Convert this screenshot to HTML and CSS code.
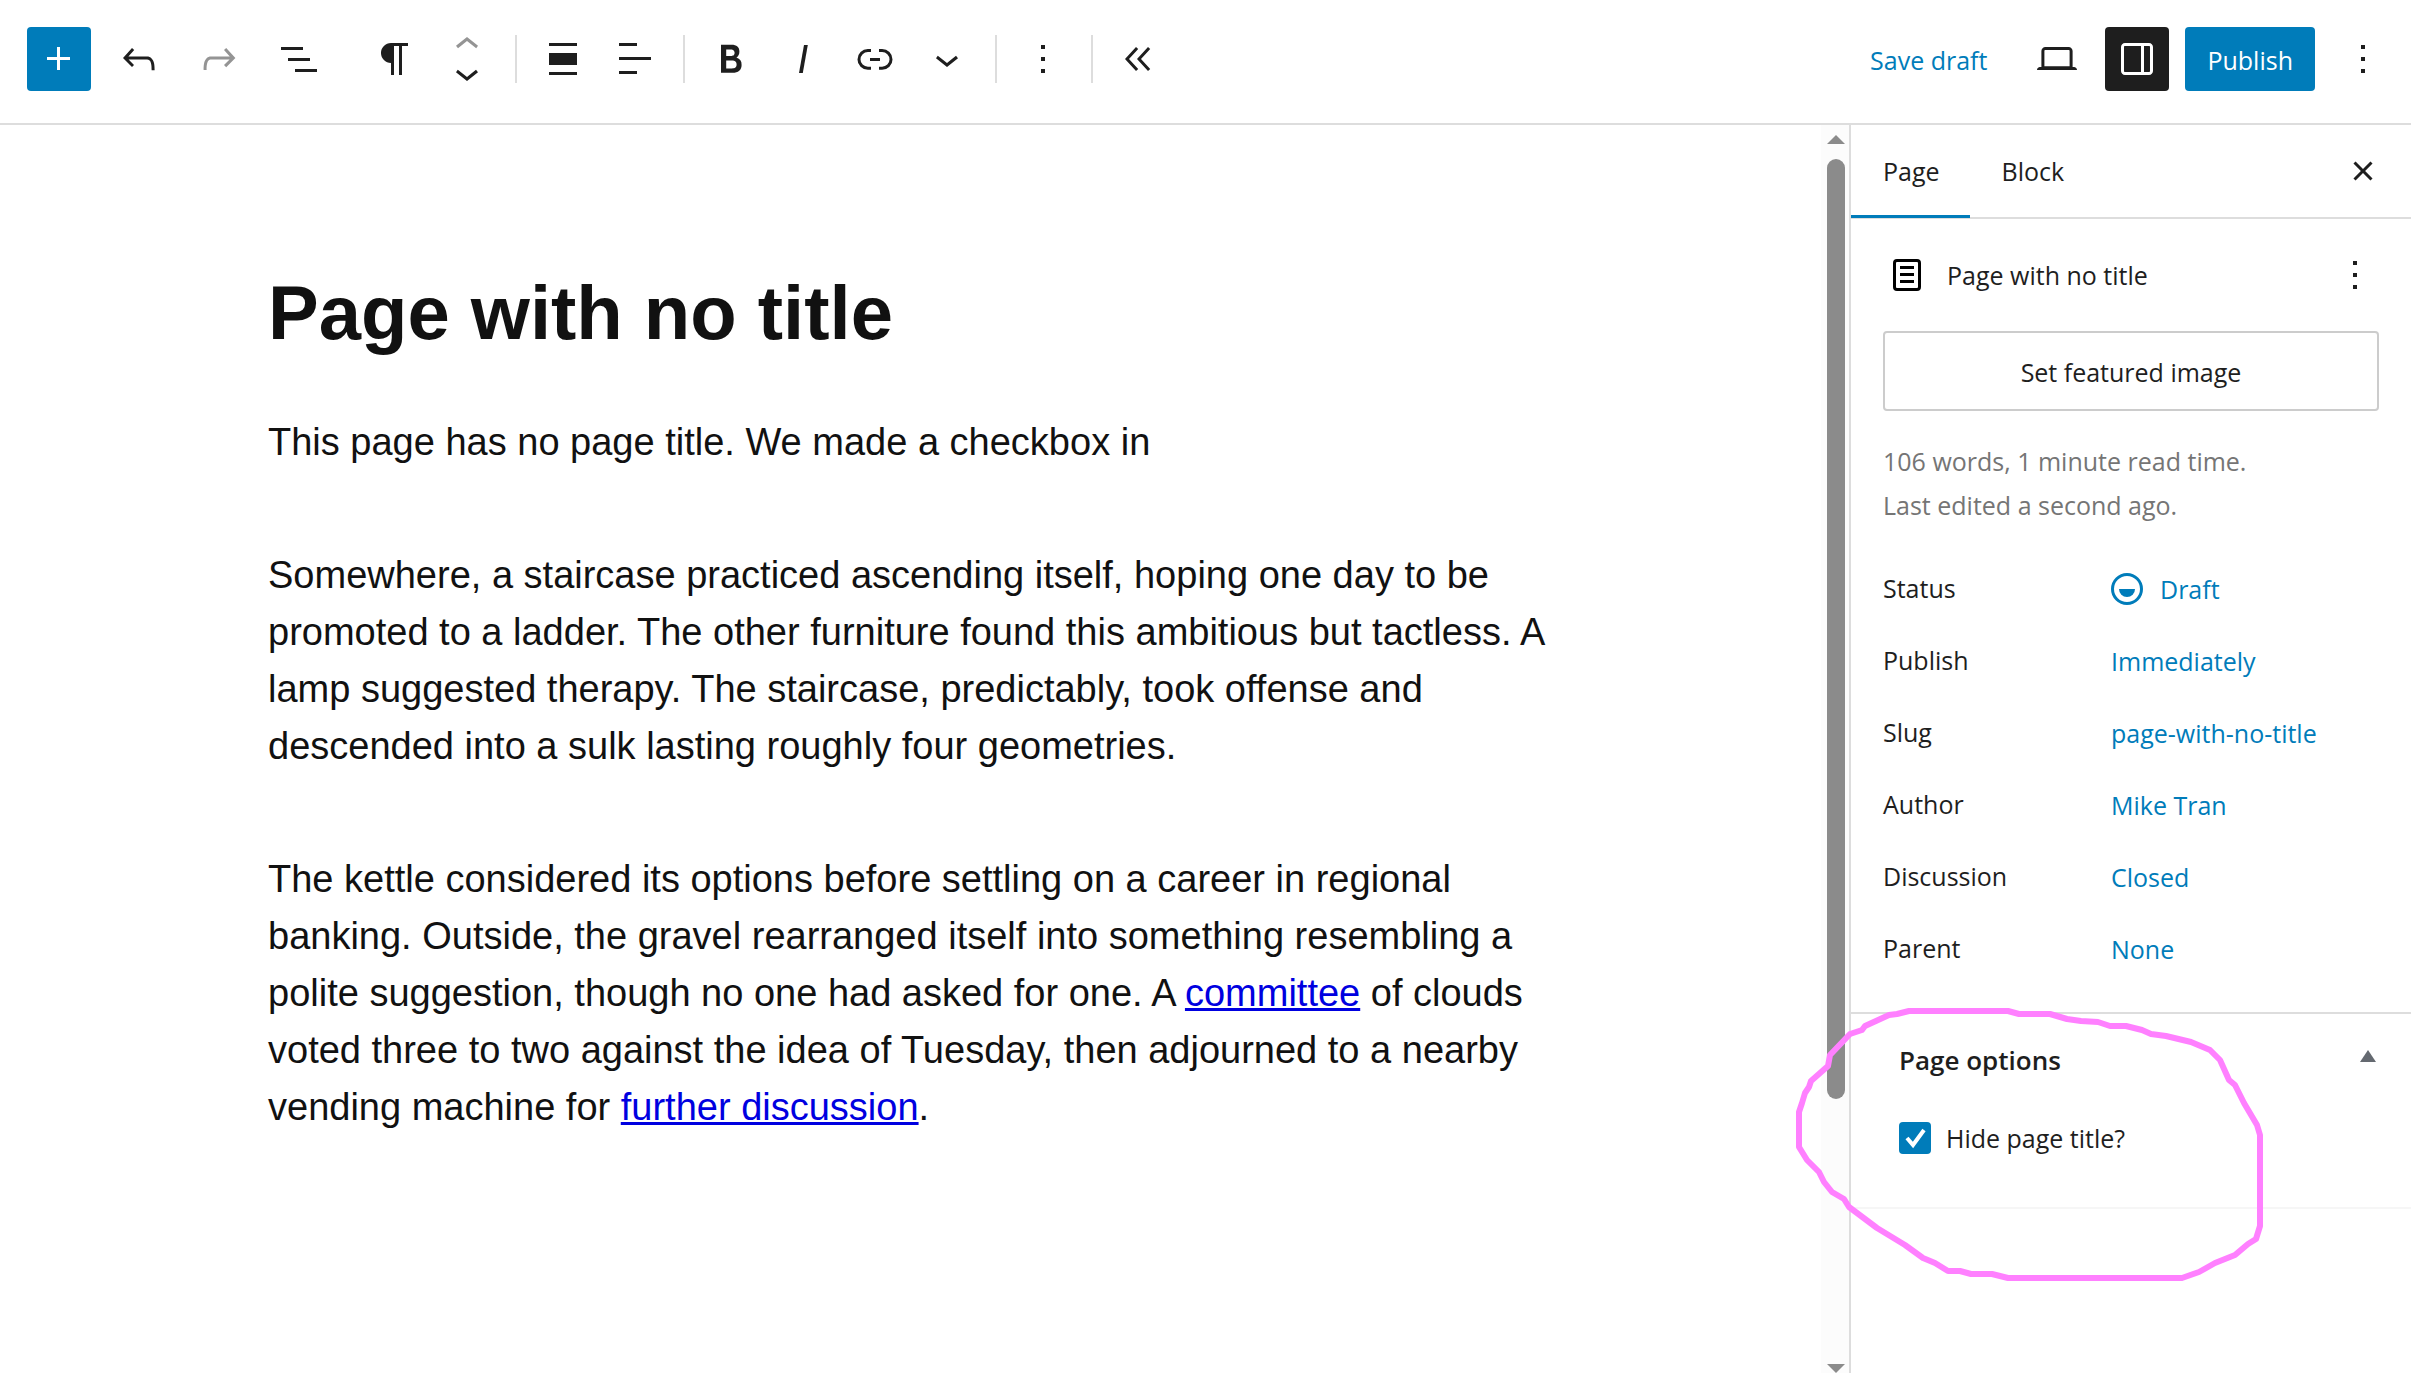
FILE: index.html
```
<!DOCTYPE html>
<html lang="en">
<head>
  <meta charset="UTF-8" />
  <meta name="viewport" content="width=device-width, initial-scale=1.0"/>
  <title>Edit Page</title>
  <link rel="stylesheet" href="styles.css">
</head>
<body>

  <!-- Top toolbar -->
  <header class="header">
    <div class="tools">
      <button class="icon-button primary" aria-label="Add block"><svg viewBox="0 0 24 24"><path d="M11 12.5V17.5H12.5V12.5H17.5V11H12.5V6H11V11H6V12.5H11Z"/></svg></button>
      <button class="icon-button" aria-label="Undo"><svg viewBox="0 0 24 24"><path d="M18.3 11.7c-.6-.6-1.4-.9-2.3-.9H6.7l2.9-3.3-1.1-1-4.5 5L8.5 16l1-1-2.7-2.7H16c.5 0 .9.2 1.3.5 1 1 1 3.4 1 4.5v.3h1.5v-.2c0-1.5 0-4.3-1.5-5.7z"/></svg></button>
      <button class="icon-button" aria-label="Redo" disabled><svg viewBox="0 0 24 24"><path d="M15.6 6.5l-1.1 1 2.9 3.3H8c-.9 0-1.7.3-2.3.9-1.4 1.5-1.4 4.2-1.4 5.6v.2h1.5v-.3c0-1.1 0-3.5 1-4.5.3-.3.7-.5 1.3-.5h9.2L14.5 15l1.1 1.1 4.6-4.6-4.6-5z"/></svg></button>
      <button class="icon-button" aria-label="Document overview"><svg viewBox="0 0 24 24"><path d="M3 6h11v1.5H3V6Zm3.5 5.5h11V13h-11v-1.5ZM21 17H10v1.5h11V17Z"/></svg></button>
    </div>

    <div class="block-toolbar">
      <div class="group">
        <button class="tool" aria-label="Paragraph"><svg viewBox="0 0 24 24"><path d="m9.996 14v-.225l.004 0v6.225h1.5v-14.5h2.5v14.5h1.5v-14.5h3v-1.5h-8.504c-2.761 0-5 2.239-5 5 0 2.761 2.239 5 5 5z"/></svg></button>
        <div class="mover">
          <button aria-label="Move up" disabled><svg viewBox="0 0 24 24"><path d="M6.5 12.4L12 8l5.5 4.4-.9 1.2L12 10l-4.5 3.6-1-1.2z"/></svg></button>
          <button aria-label="Move down"><svg viewBox="0 0 24 24"><path d="M17.5 11.6L12 16l-5.5-4.4.9-1.2L12 14l4.5-3.6 1 1.2z"/></svg></button>
        </div>
      </div>
      <div class="group">
        <button class="tool" aria-label="Align"><svg viewBox="0 0 24 24"><path d="M19 5.5H5V4h14v1.5ZM19 20H5v-1.5h14V20ZM5 9h14v6H5V9Z"/></svg></button>
        <button class="tool" aria-label="Align text"><svg viewBox="0 0 24 24"><path d="M13 5.5H4V4h9v1.5Zm7 7H4V11h16v1.5Zm-7 7H4V18h9v1.5Z"/></svg></button>
      </div>
      <div class="group">
        <button class="tool" aria-label="Bold"><svg viewBox="0 0 24 24"><path d="M14.7 11.3c1-.6 1.5-1.6 1.5-3 0-2.3-1.3-3.4-4-3.4H7v14h5.8c1.4 0 2.5-.3 3.3-1 .8-.7 1.2-1.7 1.2-2.9.1-1.9-.8-3.1-2.6-3.7zm-5.1-4h2.3c.6 0 1.1.1 1.4.4.3.3.5.7.5 1.2s-.2 1-.5 1.2c-.3.3-.8.4-1.4.4H9.6V7.3zm4.6 9c-.4.3-1 .4-1.7.4H9.6v-3.9h2.9c.7 0 1.3.2 1.7.5.4.3.6.8.6 1.4s-.2 1.2-.6 1.6z"/></svg></button>
        <button class="tool" aria-label="Italic"><svg viewBox="0 0 24 24"><path d="M12.5 5L10 19h1.9l2.5-14z"/></svg></button>
        <button class="tool" aria-label="Link"><svg viewBox="0 0 24 24"><path d="M10 17.389H8.444A5.194 5.194 0 1 1 8.444 7H10v1.5H8.444a3.694 3.694 0 0 0 0 7.389H10v1.5ZM14 7h1.556a5.194 5.194 0 0 1 0 10.39H14v-1.5h1.556a3.694 3.694 0 0 0 0-7.39H14V7Zm-4.5 6h5v-1.5h-5V13Z"/></svg></button>
        <button class="tool" aria-label="More"><svg viewBox="0 0 24 24"><path d="M17.5 11.6L12 16l-5.5-4.4.9-1.2L12 14l4.5-3.6 1 1.2z"/></svg></button>
      </div>
      <div class="group">
        <button class="tool" aria-label="Block options"><svg viewBox="0 0 24 24"><path d="M13 19h-2v-2h2v2zm0-6h-2v-2h2v2zm0-6h-2V5h2v2z"/></svg></button>
      </div>
      <div class="group">
        <button class="tool" aria-label="Hide block tools"><svg viewBox="0 0 24 24"><path d="M11.6 7l-1.1-1L5 12l5.5 6 1.1-1L7 12l4.6-5zm6 0l-1.1-1-5.5 6 5.5 6 1.1-1-4.6-5 4.6-5z"/></svg></button>
      </div>
    </div>

    <div class="settings">
      <button class="text-button">Save draft</button>
      <button class="icon-button" aria-label="View"><svg viewBox="0 0 24 24"><path d="M20.5 16h-.7V8c0-1.1-.9-2-2-2H6.2c-1.1 0-2 .9-2 2v8h-.7c-.8 0-1.5.7-1.5 1.5h20c0-.8-.7-1.5-1.5-1.5zM5.7 8c0-.3.2-.5.5-.5h11.6c.3 0 .5.2.5.5v7.6H5.7V8z"/></svg></button>
      <button class="icon-button pressed" aria-label="Settings"><svg viewBox="0 0 24 24"><path d="M18 4H6c-1.1 0-2 .9-2 2v12c0 1.1.9 2 2 2h12c1.1 0 2-.9 2-2V6c0-1.1-.9-2-2-2zm-4 14.5H6c-.3 0-.5-.2-.5-.5V6c0-.3.2-.5.5-.5h8v13zm4.5-.5c0 .3-.2.5-.5.5h-2.5v-13H18c.3 0 .5.2.5.5v12z"/></svg></button>
      <button class="text-button primary">Publish</button>
      <button class="icon-button" aria-label="Options"><svg viewBox="0 0 24 24"><path d="M13 19h-2v-2h2v2zm0-6h-2v-2h2v2zm0-6h-2V5h2v2z"/></svg></button>
    </div>
  </header>

  <div class="body">
    <!-- Page content -->
    <main class="canvas">
      <article class="post">
        <h1>Page with no title</h1>
        <p>This page has no page title. We made a checkbox in</p>
        <p>Somewhere, a staircase practiced ascending itself, hoping one day to be promoted to a ladder. The other furniture found this ambitious but tactless. A lamp suggested therapy. The staircase, predictably, took offense and descended into a sulk lasting roughly four geometries.</p>
        <p>The kettle considered its options before settling on a career in regional banking. Outside, the gravel rearranged itself into something resembling a polite suggestion, though no one had asked for one. A <a href="#">committee</a> of clouds voted three to two against the idea of Tuesday, then adjourned to a nearby vending machine for <a href="#">further discussion</a>.</p>
      </article>
    </main>

    <div class="scrollbar" aria-hidden="true">
      <svg class="arrow" viewBox="0 0 18 9"><path d="M9 0l9 9H0z"/></svg>
      <div class="track"><div class="thumb"></div></div>
      <svg class="arrow" viewBox="0 0 18 9"><path d="M0 0h18L9 9z"/></svg>
    </div>

    <!-- Settings sidebar -->
    <aside class="sidebar">
      <div class="tabs">
        <button class="tab active">Page</button>
        <button class="tab">Block</button>
        <button class="icon-button close" aria-label="Close settings"><svg viewBox="0 0 24 24"><path d="M12 13.06l3.712 3.713 1.061-1.06L13.061 12l3.712-3.712-1.06-1.06L12 10.938 8.288 7.227l-1.061 1.06L10.939 12l-3.712 3.712 1.06 1.061L12 13.061z"/></svg></button>
      </div>

      <section class="summary">
        <div class="card">
          <svg viewBox="0 0 24 24"><path d="M15.5 7.5h-7V9h7V7.5Zm-7 3.5h7v1.5h-7V11Zm7 3.5h-7V16h7v-1.5Z"/><path fill-rule="evenodd" d="M17 4H7a2 2 0 0 0-2 2v12a2 2 0 0 0 2 2h10a2 2 0 0 0 2-2V6a2 2 0 0 0-2-2ZM7 5.5h10a.5.5 0 0 1 .5.5v12a.5.5 0 0 1-.5.5H7a.5.5 0 0 1-.5-.5V6a.5.5 0 0 1 .5-.5Z"/></svg>
          <h2>Page with no title</h2>
          <button aria-label="Actions"><svg viewBox="0 0 24 24"><path d="M13 19h-2v-2h2v2zm0-6h-2v-2h2v2zm0-6h-2V5h2v2z"/></svg></button>
        </div>
        <button class="featured">Set featured image</button>
        <p class="info">106 words, 1 minute read time.<br>Last edited a second ago.</p>
        <div class="rows">
          <div class="row">
            <span>Status</span>
            <button class="status"><svg viewBox="0 0 16 16"><circle cx="8" cy="8" r="7.25" fill="none" stroke="currentColor" stroke-width="1.5"/><path d="M4 8h8a4 4 0 0 1-8 0z"/></svg>Draft</button>
          </div>
          <div class="row"><span>Publish</span><button>Immediately</button></div>
          <div class="row"><span>Slug</span><button>page-with-no-title</button></div>
          <div class="row"><span>Author</span><button>Mike Tran</button></div>
          <div class="row"><span>Discussion</span><button>Closed</button></div>
          <div class="row"><span>Parent</span><button>None</button></div>
        </div>
      </section>

      <section class="options">
        <div class="options-head">
          <h2>Page options</h2>
          <button aria-label="Toggle panel: Page options"><svg viewBox="0 0 16 12"><path d="M8 0l8 12H0z"/></svg></button>
        </div>
        <label class="check"><input type="checkbox" checked> Hide page title?</label>
        <!-- Hand-drawn circle around the checkbox -->
        <svg class="marker" viewBox="0 0 500 320" aria-hidden="true"><path d="M129 31H228L239 34H270L287 39 301 41 318 42 330 46H346L362 50 371 54 386 56 411 62 430 70 440 80 449 100 455 105 464 123 477 145 480 155V246L476 259 468 264 455 275 435 283 419 292 402 298H228L212 294H191L180 291H168L155 283 143 278 125 265 97 248 69 227 64 219 52 212 44 202 39 192 27 180 19 167V132L22 123 25 113 29 107 31 101 48 86 50 75 70 54 82 50 85 46 109 35 117 34Z"/></svg>
      </section>
    </aside>
  </div>

</body>
</html>
```
FILE: styles.css
```
/* General */
* {
  box-sizing: border-box;
}
body {
  margin: 0;
  height: 100vh;
  display: flex;
  flex-direction: column;
  overflow: hidden;
  background: #fff;
  color: #1e1e1e;
  font-family: "Segoe UI", "Open Sans", "Noto Sans", sans-serif;
  font-size: 25px;
}
button {
  padding: 0;
  border: none;
  background: none;
  color: inherit;
  font: inherit;
  cursor: pointer;
}
button:disabled {
  color: #949494;
}
svg {
  display: block;
  fill: currentColor;
}
h1, h2, p {
  margin: 0;
}

/* Header */
.header {
  display: flex;
  align-items: center;
  padding: 27px 16px 32px 27px;
  border-bottom: 2px solid #ddd;
}
.tools, .settings {
  display: flex;
  gap: 16px;
}
.settings {
  margin-left: auto;
}
.icon-button, .tool {
  display: flex;
  align-items: center;
  justify-content: center;
  width: 64px;
  height: 64px;
  border-radius: 4px;
}
.tool {
  width: 72px;
}
.icon-button svg, .tool svg, .mover svg, .card svg {
  width: 48px;
  height: 48px;
}
.text-button {
  height: 64px;
  padding: 2px 22px 0;
  border-radius: 4px;
  color: #007cba;
}
.primary {
  background: #007cba;
  color: #fff;
}
.pressed {
  background: #1e1e1e;
  color: #fff;
}
.block-toolbar {
  display: flex;
  align-items: center;
  margin-left: 18px;
}
.group {
  display: flex;
  align-items: center;
  height: 48px;
  margin-left: 10px;
  padding-right: 12px;
  border-right: 2px solid #ddd;
}
.group:last-child {
  border-right: none;
}
.mover button {
  display: flex;
  align-items: center;
  justify-content: center;
  width: 72px;
  height: 28px;
}
.mover svg {
  flex: none;
}

/* Content */
.body {
  flex: 1;
  display: flex;
  min-height: 0;
}
.canvas {
  flex: 1;
  padding: 142px 40px 0;
}
.post {
  max-width: 1285px;
  margin: 0 auto;
  color: #111;
  font-family: Arial, "Liberation Sans", sans-serif;
  font-size: 38px;
  line-height: 57px;
}
.post h1 {
  margin-bottom: 56px;
  font-size: 76px;
  line-height: 91px;
}
.post p {
  margin-bottom: 76px;
}
.post a {
  color: #0000e0;
}

/* Scrollbar */
.scrollbar {
  display: flex;
  flex-direction: column;
  align-items: center;
  width: 28px;
  padding-top: 10px;
  padding-left: 2px;
  background: #fcfcfc;
  color: #8b8b8b;
}
.arrow {
  flex: none;
  width: 18px;
  height: 9px;
}
.track {
  flex: 1;
  width: 18px;
  padding-top: 15px;
}
.thumb {
  height: 78%;
  border-radius: 9px;
  background: #8b8b8b;
}

/* Sidebar */
.sidebar {
  width: 562px;
  border-left: 2px solid #ddd;
}
.tabs {
  display: flex;
  align-items: center;
  height: 94px;
  padding-right: 16px;
  border-bottom: 2px solid #ddd;
}
.tab {
  height: 94px;
  padding: 3px 30px 0 32px;
  border-bottom: 3px solid transparent;
}
.tab.active {
  border-color: #007cba;
}
.close {
  margin-left: auto;
}
.summary {
  padding: 32px;
}
.card {
  display: flex;
  align-items: center;
  gap: 16px;
  margin-bottom: 32px;
}
.card > svg {
  color: #000;
}
.card h2 {
  flex: 1;
  font-size: 25px;
  font-weight: 400;
  line-height: 48px;
}
.featured {
  width: 100%;
  height: 80px;
  padding-top: 2px;
  border: 2px solid #ccc;
  border-radius: 4px;
}
.info {
  margin: 28px 0 29px;
  color: #757575;
  line-height: 44px;
}
.rows {
  display: flex;
  flex-direction: column;
  gap: 8px;
}
.row {
  display: flex;
  align-items: center;
  height: 64px;
}
.row span {
  width: 228px;
}
.row button {
  padding-top: 2px;
  color: #007cba;
}
.row .status {
  display: flex;
  align-items: center;
  gap: 17px;
}
.status svg {
  width: 32px;
  height: 32px;
}

/* Page options */
.options {
  position: relative;
  padding: 0 35px 37px 48px;
  border-top: 2px solid #ddd;
  border-bottom: 2px solid #f6f6f6;
}
.options-head {
  display: flex;
  align-items: center;
  justify-content: space-between;
  height: 92px;
}
.options-head h2 {
  font-size: 26px;
  font-weight: 600;
}
.options-head button {
  padding-bottom: 8px;
}
.options-head svg {
  width: 16px;
  height: 12px;
  color: #646970;
}
.check {
  display: flex;
  align-items: center;
  gap: 15px;
  height: 64px;
}
.check input {
  appearance: none;
  width: 32px;
  height: 32px;
  margin: 0;
  border-radius: 4px;
  background: #007cba url('data:image/svg+xml,<svg xmlns="http://www.w3.org/2000/svg" viewBox="0 0 32 32"><path d="M8 16l6 7L25 8" fill="none" stroke="white" stroke-width="4"/></svg>');
}
.check input:not(:checked) {
  border: 2px solid #1e1e1e;
  background: #fff;
}
.marker {
  position: absolute;
  top: -34px;
  left: -71px;
  width: 500px;
  height: 320px;
  fill: none;
  stroke: #ff80ff;
  stroke-width: 6;
  stroke-linejoin: round;
  pointer-events: none;
}
```
